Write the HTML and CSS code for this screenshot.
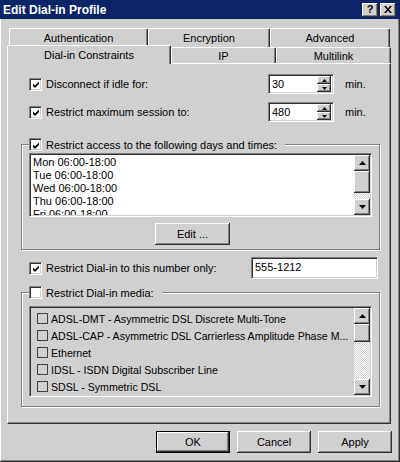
FILE: index.html
```html
<!DOCTYPE html>
<html>
<head>
<meta charset="utf-8">
<link rel="stylesheet" href="styles.css">
</head>
<body>
<div class="window">
  <div class="titlebar">
    <span class="title">Edit Dial-in Profile</span>
    <div class="tbtns">
      <span class="tbtn">?</span>
      <span class="tbtn"><svg width="8" height="7" viewBox="0 0 8 7"><path d="M0 0h2l2 2.5L6 0h2L5 3.5 8 7H6L4 4.5 2 7H0l3-3.5z" fill="#000"/></svg></span>
    </div>
  </div>
  <div class="main">
    <div class="tabs">
      <div class="tabrow back">
        <div class="tab w-auth">Authentication</div>
        <div class="tab w-enc">Encryption</div>
        <div class="tab w-adv">Advanced</div>
      </div>
      <div class="tabrow front">
        <div class="tab sel w-dial">Dial-in Constraints</div>
        <div class="tab w-ip">IP</div>
        <div class="tab w-multi">Multilink</div>
      </div>
    </div>
    <div class="panel">
      <div class="row r1">
        <label class="chk"><span class="cb"><svg width="9" height="9" viewBox="0 0 9 9"><path d="M1 3.5l2 2 4-4v2.5l-4 4-2-2z" fill="#000"/></svg></span>Disconnect if idle for:</label>
        <div class="spin"><span class="spin-val">30</span><span class="spin-btns"><span class="sbtn"><svg width="5" height="3" viewBox="0 0 5 3"><path d="M2.5 0L5 3H0z" fill="#000"/></svg></span><span class="sbtn"><svg width="5" height="3" viewBox="0 0 5 3"><path d="M0 0h5L2.5 3z" fill="#000"/></svg></span></span></div>
        <span class="unit">min.</span>
      </div>
      <div class="row r2">
        <label class="chk"><span class="cb"><svg width="9" height="9" viewBox="0 0 9 9"><path d="M1 3.5l2 2 4-4v2.5l-4 4-2-2z" fill="#000"/></svg></span>Restrict maximum session to:</label>
        <div class="spin"><span class="spin-val">480</span><span class="spin-btns"><span class="sbtn"><svg width="5" height="3" viewBox="0 0 5 3"><path d="M2.5 0L5 3H0z" fill="#000"/></svg></span><span class="sbtn"><svg width="5" height="3" viewBox="0 0 5 3"><path d="M0 0h5L2.5 3z" fill="#000"/></svg></span></span></div>
        <span class="unit">min.</span>
      </div>
      <div class="group g1">
        <label class="legend chk"><span class="cb"><svg width="9" height="9" viewBox="0 0 9 9"><path d="M1 3.5l2 2 4-4v2.5l-4 4-2-2z" fill="#000"/></svg></span>Restrict access to the following days and times:</label>
        <div class="listbox lb1">
          <div class="items">
            <div>Mon 06:00-18:00</div>
            <div>Tue 06:00-18:00</div>
            <div>Wed 06:00-18:00</div>
            <div>Thu 06:00-18:00</div>
            <div>Fri 06:00-18:00</div>
          </div>
          <div class="sbar">
            <span class="sarrow"><svg width="7" height="4" viewBox="0 0 7 4"><path d="M3.5 0L7 4H0z" fill="#000"/></svg></span>
            <span class="thumb t1"></span>
            <span class="track"></span>
            <span class="sarrow"><svg width="7" height="4" viewBox="0 0 7 4"><path d="M0 0h7L3.5 4z" fill="#000"/></svg></span>
          </div>
        </div>
        <div class="btn edit">Edit ...</div>
      </div>
      <div class="row r3">
        <label class="chk"><span class="cb"><svg width="9" height="9" viewBox="0 0 9 9"><path d="M1 3.5l2 2 4-4v2.5l-4 4-2-2z" fill="#000"/></svg></span>Restrict Dial-in to this number only:</label>
        <div class="textbox">555-1212</div>
      </div>
      <div class="group g2">
        <label class="legend chk"><span class="cb"></span>Restrict Dial-in media:</label>
        <div class="listbox lb2">
          <div class="items">
            <div class="item"><span class="icb"></span>ADSL-DMT - Asymmetric DSL Discrete Multi-Tone</div>
            <div class="item"><span class="icb"></span>ADSL-CAP - Asymmetric DSL Carrierless Amplitude Phase M...</div>
            <div class="item"><span class="icb"></span>Ethernet</div>
            <div class="item"><span class="icb"></span>IDSL - ISDN Digital Subscriber Line</div>
            <div class="item"><span class="icb"></span>SDSL - Symmetric DSL</div>
          </div>
          <div class="sbar">
            <span class="sarrow"><svg width="7" height="4" viewBox="0 0 7 4"><path d="M3.5 0L7 4H0z" fill="#000"/></svg></span>
            <span class="thumb t2"></span>
            <span class="track"></span>
            <span class="sarrow"><svg width="7" height="4" viewBox="0 0 7 4"><path d="M0 0h7L3.5 4z" fill="#000"/></svg></span>
          </div>
        </div>
      </div>
    </div>
    <div class="buttons">
      <div class="btn default">OK</div>
      <div class="btn">Cancel</div>
      <div class="btn">Apply</div>
    </div>
  </div>
</div>
</body>
</html>
```
FILE: styles.css
```css
* { box-sizing: border-box; }
html, body { margin: 0; padding: 0; }
body {
  width: 400px; height: 462px; overflow: hidden;
  background: #d0d0d0;
  font-family: "Liberation Sans", Arial, sans-serif;
  font-size: 11px; color: #000;
}
.window {
  width: 400px; height: 462px;
  display: flex; flex-direction: column;
  background: #d0d0d0;
  box-shadow: inset -1px -1px 0 #303030, inset 1px 0 0 #fff, inset -2px -2px 0 #808080;
}
.titlebar {
  height: 19px; flex: none;
  background: #0a2468; color: #fff;
  display: flex; align-items: center;
  padding: 0 4px 0 3px;
}
.title { font-weight: bold; font-size: 12px; flex: 1; }
.tbtns { display: flex; gap: 2px; }
.tbtn {
  width: 16px; height: 14px;
  background: #d0d0d0; color: #000;
  box-shadow: inset -1px -1px 0 #303030, inset 1px 1px 0 #fff, inset -2px -2px 0 #808080;
  display: flex; align-items: center; justify-content: center;
  font-weight: bold; font-size: 11px; line-height: 1;
}
.main { flex: 1; padding: 9px 9px 0 7px; display: flex; flex-direction: column; }

/* tabs */
.tabs { height: 35px; flex: none; display: flex; flex-direction: column; }
.tabrow { display: flex; flex: none; }
.tabrow.back { height: 19px; padding-left: 2px; }
.tabrow.front { height: 19px; margin-top: -2px; align-items: flex-start; position: relative; z-index: 1; }
.tab {
  display: flex; align-items: center; justify-content: center;
  background: #d0d0d0;
  border-top: 1px solid #fff; border-left: 1px solid #fff; border-right: 1px solid #303030;
  box-shadow: inset -1px 0 0 #808080;
  border-radius: 2px 2px 0 0;
  font-size: 11px;
}
.back .tab { height: 19px; padding-bottom: 1px; }
.front .tab { height: 16px; margin-top: 2px; }
.front .tab.sel { height: 19px; margin-top: 0; padding-bottom: 1px; }
.w-auth { width: 139px; }
.w-enc { width: 122px; }
.w-adv { width: 120px; }
.w-dial { width: 164px; }
.w-ip { width: 105px; }
.w-multi { width: 115px; }

/* panel */
.panel {
  height: 361px; flex: none;
  background: #d0d0d0;
  border-top: 1px solid #fff; border-left: 1px solid #fff;
  border-right: 1px solid #303030; border-bottom: 1px solid #303030;
  box-shadow: inset -1px -1px 0 #808080;
  padding: 10px 10px 0 13px;
  display: flex; flex-direction: column;
}
.row { display: flex; align-items: center; padding-left: 8px; flex: none; }
.r1 { height: 20px; }
.r2 { height: 20px; margin-top: 8px; }
.r3 { height: 22px; margin-top: 7px; }
.chk { display: flex; align-items: center; gap: 4px; flex: 1; white-space: nowrap; }
.cb {
  width: 13px; height: 13px; flex: none;
  background: #fff;
  border-top: 1px solid #808080; border-left: 1px solid #808080;
  border-right: 1px solid #fff; border-bottom: 1px solid #fff;
  box-shadow: inset 1px 1px 0 #303030, inset -1px -1px 0 #d0d0d0;
  display: flex; align-items: center; justify-content: center;
  padding: 1px 0 0 1px;
}
.cb svg { display: block; }
.spin {
  width: 66px; height: 20px; margin-right: 11px;
  display: flex; background: #fff;
  border-top: 1px solid #808080; border-left: 1px solid #808080;
  border-right: 1px solid #fff; border-bottom: 1px solid #fff;
  box-shadow: inset 1px 1px 0 #303030, inset -1px -1px 0 #d0d0d0;
  padding: 2px;
}
.spin-val { flex: 1; padding-left: 1px; line-height: 14px; }
.spin-btns { width: 14px; display: flex; flex-direction: column; margin-top: -1px; margin-bottom: -1px; }
.sbtn {
  flex: 1; background: #d0d0d0;
  box-shadow: inset -1px -1px 0 #303030, inset 1px 1px 0 #fff, inset -2px -2px 0 #808080;
  display: flex; align-items: center; justify-content: center;
}
.sbtn svg { display: block; }
.unit { width: 35px; flex: none; }
.textbox {
  width: 127px; height: 22px; margin-right: 2px; flex: none;
  background: #fff;
  border-top: 1px solid #808080; border-left: 1px solid #808080;
  border-right: 1px solid #fff; border-bottom: 1px solid #fff;
  box-shadow: inset 1px 1px 0 #303030, inset -1px -1px 0 #d0d0d0;
  padding: 2px 0 0 3px; line-height: 15px;
}

/* group boxes */
.group {
  flex: none;
  border: 1px solid #808080;
  box-shadow: inset 1px 1px 0 #fff, 1px 1px 0 #fff;
  padding: 0 7px 4px 7px;
  display: flex; flex-direction: column;
}
.g1 { margin-top: 22px; }
.g2 { margin-top: 13px; padding-bottom: 9px; }
.legend {
  flex: none; align-self: flex-start;
  height: 13px; margin-top: -7px;
  background: #d0d0d0; padding-right: 8px;
}
.listbox {
  display: flex;
  border-top: 1px solid #808080; border-left: 1px solid #808080;
  border-right: 1px solid #fff; border-bottom: 1px solid #fff;
  box-shadow: inset 1px 1px 0 #303030, inset -1px -1px 0 #d0d0d0;
  padding: 1px;
}
.lb1 { height: 64px; margin-top: 2px; background: #fff; }
.lb2 { height: 91px; margin-top: 7px; background: #d0d0d0; }
.items { flex: 1; overflow: hidden; }
.lb1 .items { padding: 1px 0 0 2px; line-height: 13px; }
.lb2 .items { padding: 2px 0 0 6px; }
.item { height: 17px; display: flex; align-items: center; gap: 3px; white-space: nowrap; font-size: 10.6px; }
.icb { width: 11px; height: 11px; border: 1px solid #404040; flex: none; }
.sbar { width: 16px; display: flex; flex-direction: column; flex: none; }
.sarrow, .thumb {
  background: #d0d0d0;
  box-shadow: inset -1px -1px 0 #303030, inset 1px 1px 0 #fff, inset -2px -2px 0 #808080;
  display: flex; align-items: center; justify-content: center; flex: none;
}
.sarrow { height: 16px; }
.sarrow svg { display: block; }
.t1 { height: 22px; }
.t2 { height: 18px; }
.track {
  flex: 1;
  background: repeating-conic-gradient(#fff 0 25%, #d0d0d0 0 50%) 0 0 / 2px 2px;
}

/* buttons */
.btn {
  width: 74px; height: 22px;
  background: #d0d0d0;
  box-shadow: inset -1px -1px 0 #303030, inset 1px 1px 0 #fff, inset -2px -2px 0 #808080;
  display: flex; align-items: center; justify-content: center;
}
.edit { width: 75px; margin: 6px 0 0 126px; }
.default { border: 1px solid #000; }
.buttons {
  display: flex; justify-content: flex-end; gap: 7px;
  margin: 7px -1px 0 0; flex: none;
}
```
